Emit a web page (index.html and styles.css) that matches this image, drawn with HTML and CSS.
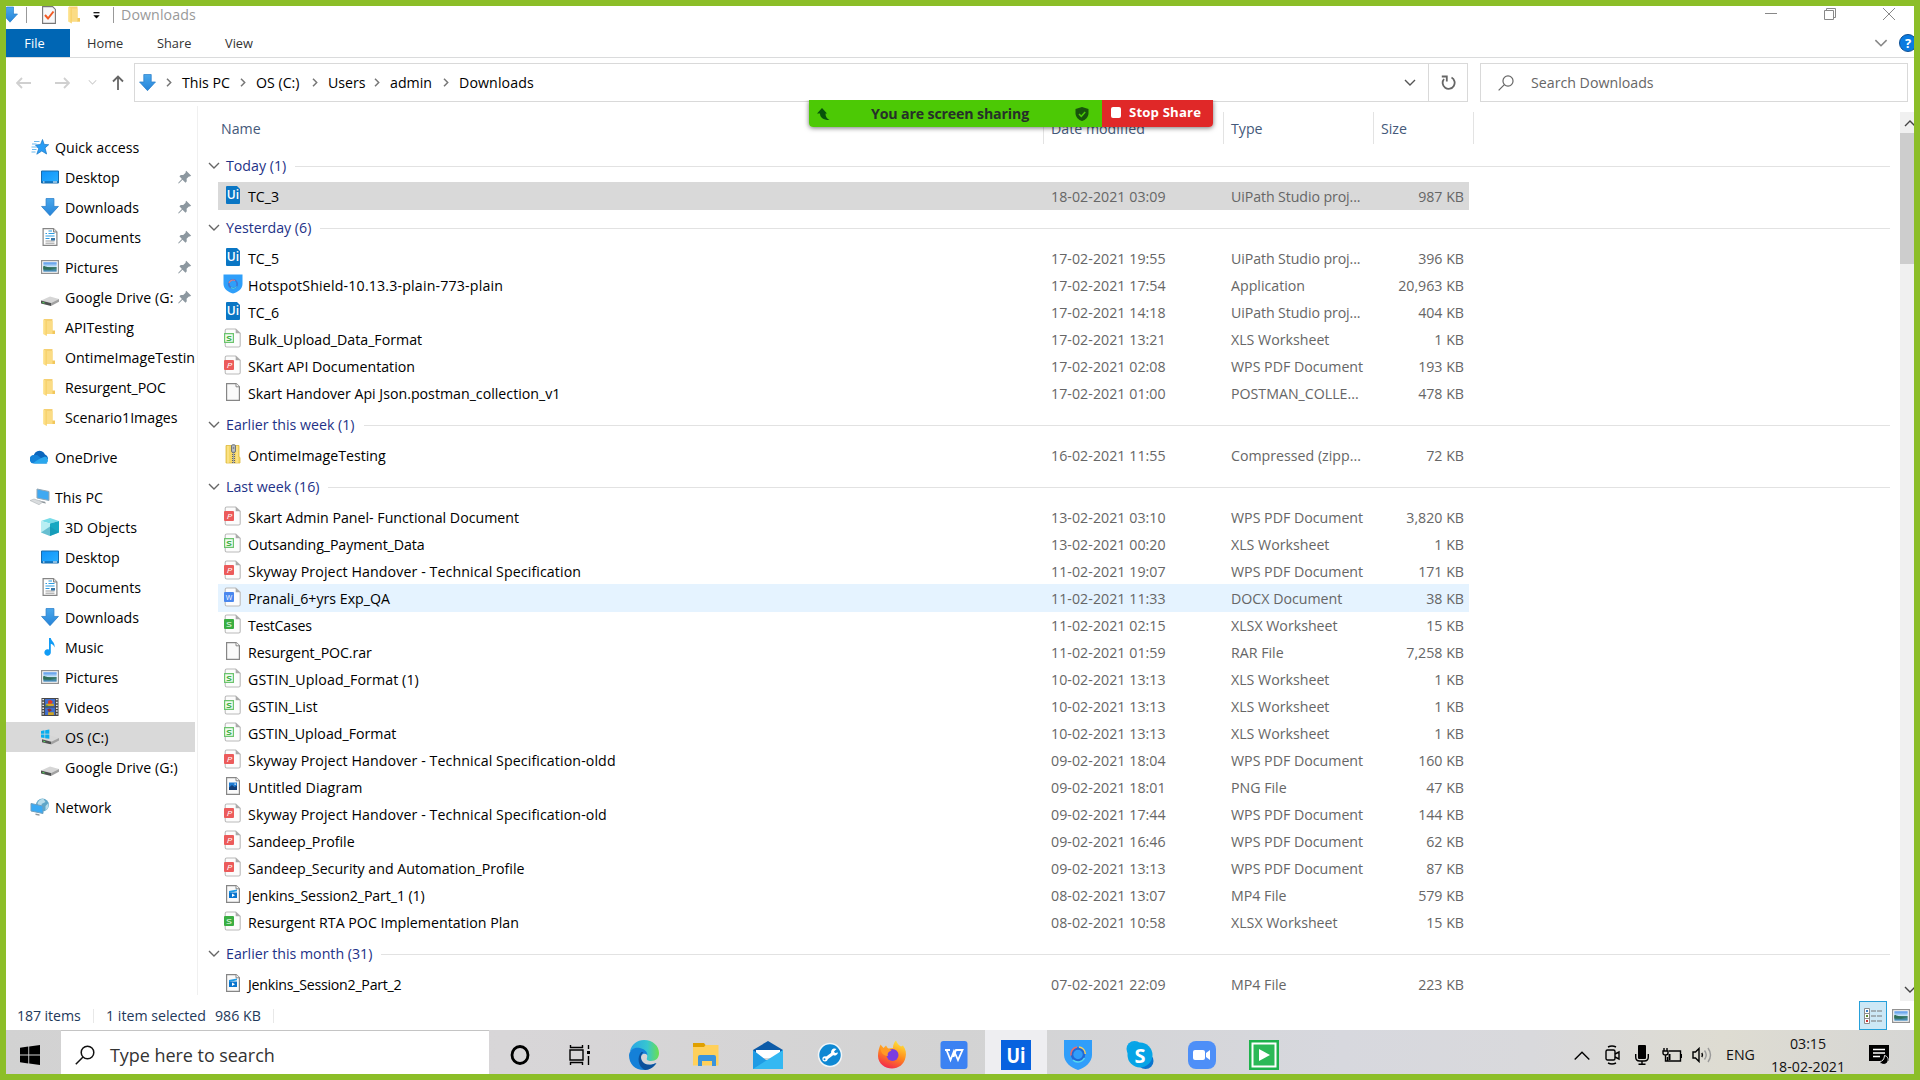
FILE: index.html
```html
<!DOCTYPE html>
<html lang="en">
<head>
<meta charset="utf-8">
<title>Downloads</title>
<link rel="stylesheet" href="styles.css">
</head>
<body>
<svg class="defs" width="0" height="0" aria-hidden="true">
<defs>
<linearGradient id="gBlue" x1="0" y1="0" x2="0" y2="1"><stop offset="0" stop-color="#4aa8ec"/><stop offset="1" stop-color="#2583d8"/></linearGradient>
<linearGradient id="gFold" x1="0" y1="0" x2="1" y2="0"><stop offset="0" stop-color="#ffe9a3"/><stop offset="1" stop-color="#f7cf62"/></linearGradient>
<linearGradient id="gSky" x1="0" y1="0" x2="0" y2="1"><stop offset="0" stop-color="#4a90e8"/><stop offset=".5" stop-color="#d4ecfa"/><stop offset=".55" stop-color="#3f7d6d"/><stop offset="1" stop-color="#4a8fc4"/></linearGradient>
<linearGradient id="gDesk" x1="0" y1="0" x2="1" y2="1"><stop offset="0" stop-color="#0f93fa"/><stop offset="1" stop-color="#2bb0ff"/></linearGradient>
<linearGradient id="gEdge" x1="0" y1="0" x2="1" y2="0"><stop offset="0" stop-color="#2aa5e6"/><stop offset=".6" stop-color="#37c6d0"/><stop offset="1" stop-color="#6be04e"/></linearGradient>
<linearGradient id="gFox" x1=".7" y1="0" x2=".3" y2="1"><stop offset="0" stop-color="#ffe53b"/><stop offset=".5" stop-color="#ff8a1c"/><stop offset="1" stop-color="#f3244f"/></linearGradient>
<symbol id="down" viewBox="0 0 16 16"><path d="M4.500.500h7v7h4L8 15.700.500 7.500h4z" fill="url(#gBlue)" stroke="#2a7fcb" stroke-width=".7"/></symbol>
<symbol id="folder" viewBox="0 0 12 17"><path d="M1 0h8.500v12l2.500 1v2H1z" fill="#f5d071"/><path d="M9 11.500h3V15H9z" fill="#f2c75c"/><path d="M0 .3 3.800 2v15L0 15z" fill="url(#gFold)"/><path d="M3.800 2H9.500v13H3.800z" fill="#fbdc85"/></symbol>
<symbol id="star" viewBox="0 0 18 16"><path d="m11.500.5 1.700 4.900 4.500.3-3.700 3.200 1.600 6.100-4.800-3-5 3.200 1.900-5.500L4.500 6l5-.5z" fill="#2a9df4" stroke="#1576c4" stroke-width=".7"/><path d="M3 2.500h5.500M1 5h4.500M.5 8H6M1 10.500h4.500M.5 13h4" stroke="#6ab8ee"/></symbol>
<symbol id="desktop" viewBox="0 0 18 13"><path d="M.5.5h17v12H.5z" fill="url(#gDesk)" stroke="#1b6cab"/><path d="M1 11.500h16" stroke="#116bb0" stroke-width="1.400"/><path d="M2 11.500h1.500M12 11.500h4" stroke="#fff"/></symbol>
<symbol id="doc" viewBox="0 0 15 18"><path d="M.6.6h10.400l3.400 3.400v13.400H.6z" fill="#fff" stroke="#858585" stroke-width="1.200"/><path d="M11 .6V4h3.400" fill="#ddd" stroke="#858585"/><path d="M3 5.500h1.500M6 3h3.500M6 5.500h6M3 8h9M3 10.500h4" stroke="#2f9be0" stroke-width="1.200"/><path d="M3 13h9M3 15.200h9" stroke="#999"/><path d="M8.500 10h4v2.500h-4z" fill="#3a76a6"/></symbol>
<symbol id="picture" viewBox="0 0 18 14"><path d="M.6.6h16.800v12.800H.6z" fill="#fff" stroke="#929292" stroke-width="1.200"/><path d="M2.300 2.300h13.400v9.400H2.300z" fill="url(#gSky)"/><path d="M2.300 6c3 0 5 2.500 13.400 2.600L9 9.800 2.300 9.500z" fill="#2f6f59"/></symbol>
<symbol id="drive" viewBox="0 0 18 10"><path d="M0 4.500 9 .5l9 2.500-8 4z" fill="#d6d6d6"/><path d="M0 4.500 10 7v3L0 7.500z" fill="#4f5151"/><path d="m10 7 8-4v2.800L10 10z" fill="#a1a1a1"/><path d="M1.500 6.400 3.500 7" stroke="#54e85c"/></symbol>
<symbol id="osdrive" viewBox="0 0 19 16"><use href="#drive" x="1" y="6" width="18" height="10"/><path d="M0 1.600 3.700 1v3.600H0zM4.400.9 8.800.2v4.400H4.400zM0 5.300h3.700V9L0 8.500zM4.400 5.300h4.400v4.500l-4.400-.6z" fill="#08adee"/></symbol>
<symbol id="pin" viewBox="0 0 14 14"><path d="m8.200.8 5 5-1.500.8-.8-.2-2.300 2.400.2 2.500-1.300 1.400-3-3L1 13.200l-.8.300.3-.9 3.400-3.700-2.500-2.600 1.400-1.400 2.400.2 2.500-2.300-.2-.8z" fill="#8c979f"/></symbol>
<symbol id="cloud" viewBox="0 0 20 14"><path d="M4 9a5.800 5.800 0 0 1 11-4.500A5 5 0 0 1 18 9z" fill="#0b66bd"/><circle cx="4" cy="9" r="4" fill="#1283db"/><path d="M4.500 13.500a4 4 0 0 1-1.300-8l4-.4 10.300 8.400z" fill="#1482d8"/><path d="M3.500 13c3-3 7.500-5 11.500-6.500A3.800 3.800 0 0 1 16 13.600H5z" fill="#2aa7ed"/></symbol>
<symbol id="pc" viewBox="0 0 20 17"><path d="m7 .5 12 2.500v9L7 9.500z" fill="#3fa9f2" stroke="#93a7b5"/><path d="m9 12 6 1.200 1 1.800-6-1z" fill="#8e979d"/><path d="m0 12 4-1.500 9 3-4 2.700z" fill="#d9dcde" stroke="#a4aaae" stroke-width=".5"/></symbol>
<symbol id="cube" viewBox="0 0 18 18"><path d="m0 3 9-3 9 3-9 2.500z" fill="#77dce8"/><path d="m0 3 9 2.500V18L0 14.500z" fill="#b8eef3"/><path d="m18 3-9 2.500V18l9-3.500z" fill="#16a8c2"/><path d="m0 14.500 9-6 9 6L9 18z" fill="#158fb0" opacity=".5"/></symbol>
<symbol id="music" viewBox="0 0 12 18"><path d="M5 0h1.800c.4 3 4.500 4.500 3.700 9.500-.6-2.200-2-3.300-3.700-3.700v8.500a3.200 3.200 0 1 1-1.800-2.700z" fill="#109bf5"/></symbol>
<symbol id="video" viewBox="0 0 18 19"><path d="M0 0h18v19H0z" fill="#474747"/><path d="M1.800 1v17M16.200 1v17" stroke="#e6e6e6" stroke-width="1.800" stroke-dasharray="1.500 1.500"/><path d="M3.800 1h10.400v8H3.800zM3.800 10h10.400v8H3.800z" fill="#3f6fcf"/><path d="m7 3 3-1 2 2-2 3H7z" fill="#dd3b28"/><path d="M5 6h8v2.500H5zM7 15h6v3H7z" fill="#d0a622"/><path d="m6 12 3-1 2 2-3 2z" fill="#8e3030"/><path d="M4 8h3v1H4z" fill="#2f8a38"/></symbol>
<symbol id="network" viewBox="0 0 19 18"><circle cx="12" cy="7" r="6.500" fill="#5ea6c8"/><path d="M7 5c2-4 4-4 6-4l2 3-4 2 1 3-4 1zM15 8l3-3v4l-3 4z" fill="#b7dcea"/><path d="m.5 5.500 12 2.500v7.500L.5 13z" fill="#3aaaf4" stroke="#6f9fbd"/><path d="m5 15.500 4 .7v1.500l-4-.7z" fill="#8e979d"/></symbol>
<symbol id="blank" viewBox="0 0 20 20"><path d="M3.600 1.600h9.600l3.200 3.200v13.600H3.600z" fill="#fafafa" stroke="#868686" stroke-width="1.200"/><path d="M13 1.600v3.200h3.400" fill="#fff" stroke="#868686"/></symbol>
<symbol id="ui" viewBox="0 0 20 20"><path d="M3 2q0-1 1-1h10l3 3v14q0 1-1 1H4q-1 0-1-1z" fill="#0a76c4"/><text x="10" y="14" text-anchor="middle" font-family="Open Sans" font-weight="600" font-size="12" fill="#fff">Ui</text></symbol>
<symbol id="shield" viewBox="0 0 20 20"><path d="M.5.5h19V10c0 5-5 8.500-9.500 9.500C5.500 18.500.5 15 .5 10z" fill="#2f9ffa"/><circle cx="10" cy="10" r="4.200" fill="none" stroke="#3f76d4" stroke-width="1.700"/><path d="M6 9A4.200 4.200 0 0 1 12 6.500" fill="none" stroke="#d97f86" stroke-width="1.200"/><path d="M8 13.500a4.200 4.200 0 0 0 5.500-1" fill="none" stroke="#46cee4" stroke-width="1.200"/></symbol>
<symbol id="sheet" viewBox="0 0 20 20"><path d="M3.700 1h9l4.500 4.300v12.200q0 1.500-1.500 1.500H3.700q-1.500 0-1.500-1.500v-15q0-1.500 1.500-1.500z" fill="#fcfcfc" stroke="#bababa" stroke-width="1.100"/><path d="M12.700 1v4.300h4.500z" fill="#aaa"/></symbol>
<symbol id="xls" viewBox="0 0 20 20"><use href="#sheet"/><path d="M1.600 5.600h8.800v8.800H1.600z" fill="#f2fbf2" stroke="#6cc46e" stroke-width="1.200"/><text x="6" y="12.800" text-anchor="middle" font-family="Open Sans" font-weight="700" font-size="7.500" textLength="6" lengthAdjust="spacingAndGlyphs" fill="#43b247">S</text></symbol>
<symbol id="xlsx" viewBox="0 0 20 20"><use href="#sheet"/><rect x="1" y="5" width="10" height="10" rx="1" fill="#3aae42"/><text x="6" y="12.800" text-anchor="middle" font-family="Open Sans" font-weight="600" font-size="7.500" textLength="6" lengthAdjust="spacingAndGlyphs" fill="#d0f0d2">S</text></symbol>
<symbol id="pdf" viewBox="0 0 20 20"><use href="#sheet"/><rect x="1" y="5" width="10" height="10" rx="1" fill="#ec5b5b"/><text x="6.500" y="12.600" text-anchor="middle" font-family="Open Sans" font-style="italic" font-size="7.500" textLength="5.500" lengthAdjust="spacingAndGlyphs" fill="#fff">P</text></symbol>
<symbol id="docx" viewBox="0 0 20 20"><use href="#sheet"/><rect x="1" y="5" width="10" height="10" rx="1" fill="#4a87ee"/><text x="6" y="12.600" text-anchor="middle" font-family="Open Sans" font-size="7" fill="#fff">W</text></symbol>
<symbol id="png" viewBox="0 0 20 20"><use href="#blank"/><path d="M6 6.500h8v7.500H6z" fill="#1e7ad1"/><path d="m6 11.500 3-2.500 2.500 2 2.500-1.500V14H6z" fill="#123e77"/><path d="M11.500 7.500h1.300v1.300h-1.300z" fill="#fff"/></symbol>
<symbol id="mp4" viewBox="0 0 20 20"><use href="#blank"/><path d="m6 7 8-1.500v1.800L6 9z" fill="#1f9ae4"/><path d="M6 8.500h8V14H6z" fill="#0874ce"/><path d="m9 9.500 3 1.700-3 1.700z" fill="#fff"/></symbol>
<symbol id="zip" viewBox="0 0 20 20"><path d="M3 1.500h13V13l1 .5V19H3z" fill="#f6d866" stroke="#ddb940" stroke-width=".8"/><path d="M5 2v17M14 2v17" stroke="#ffeaa0"/><path d="M10.500 8v11" stroke="#5f6468" stroke-width="3" stroke-dasharray="1 1"/><path d="M10.500 8v11" stroke="#aaa"/><rect x="8.500" y=".8" width="4" height="7.500" rx="1.200" fill="#b8bcc0" stroke="#707579"/><path d="M9.800 4h1.400" stroke="#555"/></symbol>
<symbol id="chev" viewBox="0 0 12 8"><path d="m1 1 5 5 5-5" fill="none" stroke="currentColor" stroke-width="1.400"/></symbol>
<symbol id="crumb" viewBox="0 0 6 9"><path d="m1 .8 3.700 3.700L1 8.200" fill="none" stroke="#777" stroke-width="1.500"/></symbol>
<symbol id="magnify" viewBox="0 0 20 20"><circle cx="12.500" cy="7.500" r="6.300" fill="none" stroke="currentColor" stroke-width="1.500"/><path d="M8 12 .8 19.200" stroke="currentColor" stroke-width="1.500"/></symbol>
</defs>
</svg>
<div class="screen">
  <header class="titlebar">
    <svg class="t-down"><use href="#down"/></svg><i class="bar"></i>
    <svg class="t-check" viewBox="0 0 14 18"><path d="M.6.6h10l2.800 2.800v14H.6z" fill="#f7f8fa" stroke="#777" stroke-width="1.100"/><path d="m3 9 3 3.500 5.500-7" fill="none" stroke="#f15a24" stroke-width="2"/></svg>
    <svg class="t-folder"><use href="#folder"/></svg>
    <svg class="t-menu" viewBox="0 0 7 7"><path d="M.5.700h6" stroke="#000" stroke-width="1.200"/><path d="M.3 3.200h6.400L3.500 6.600z"/></svg><i class="bar"></i>
    <span class="t-title">Downloads</span>
    <div class="winbtns"><svg viewBox="0 0 12 12"><path d="M0 5.500h12"/></svg><svg viewBox="0 0 12 12"><path d="M.5 2.500h9v9h-9zM2.500 2.500v-2h9v9h-2"/></svg><svg viewBox="0 0 12 12"><path d="m0 0 12 12M12 0 0 12"/></svg></div>
  </header>
  <nav class="ribbon">
    <span class="file">File</span><span class="tab home">Home</span><span class="tab share">Share</span><span class="tab view">View</span>
    <div class="rib-right"><svg class="expand"><use href="#chev"/></svg><svg class="help" viewBox="0 0 18 18"><circle cx="9" cy="9" r="8.500" fill="#0a7be0" stroke="#0d4f94"/><text x="9" y="13.800" text-anchor="middle" font-family="Open Sans" font-weight="700" font-size="13" fill="#fff">?</text></svg></div>
  </nav>
  <div class="navrow">
    <div class="arrows">
      <svg class="a-back" viewBox="0 0 15 12"><path d="M15 6H1M6 1 1 6l5 5"/></svg>
      <svg class="a-fwd" viewBox="0 0 15 12"><path d="M0 6h14M9 1l5 5-5 5"/></svg>
      <svg class="a-rec"><use href="#chev"/></svg>
      <svg class="a-up" viewBox="0 0 12 15"><path d="M6 15V1.500M1 6.500l5-5 5 5"/></svg>
    </div>
    <div class="address">
      <svg class="ad-ic"><use href="#down"/></svg>
      <svg class="cr"><use href="#crumb"/></svg><span style="width:74px">This PC</span>
      <svg class="cr"><use href="#crumb"/></svg><span style="width:72px">OS (C:)</span>
      <svg class="cr"><use href="#crumb"/></svg><span style="width:62px">Users</span>
      <svg class="cr"><use href="#crumb"/></svg><span style="width:69px">admin</span>
      <svg class="cr"><use href="#crumb"/></svg><span class="here">Downloads</span>
      <svg class="ad-chev"><use href="#chev"/></svg>
      <div class="refresh"><svg viewBox="0 0 15 16"><path d="M10.500 2.500A6 6 0 1 1 3 4" fill="none" stroke="#666" stroke-width="1.800"/><path d="M.8 1.500h5v5" fill="none" stroke="#666" stroke-width="1.800"/></svg></div>
    </div>
    <div class="searchbox"><svg><use href="#magnify"/></svg><span>Search Downloads</span></div>
  </div>
  <main class="body">
    <aside class="side">
      <div class="it top"><svg class="st"><use href="#star"/></svg><span>Quick access</span></div>
      <div class="it"><svg><use href="#desktop"/></svg><span>Desktop</span><svg class="pin"><use href="#pin"/></svg></div>
      <div class="it"><svg><use href="#down"/></svg><span>Downloads</span><svg class="pin"><use href="#pin"/></svg></div>
      <div class="it"><svg><use href="#doc"/></svg><span>Documents</span><svg class="pin"><use href="#pin"/></svg></div>
      <div class="it"><svg><use href="#picture"/></svg><span>Pictures</span><svg class="pin"><use href="#pin"/></svg></div>
      <div class="it"><svg class="low"><use href="#drive"/></svg><span class="wide">Google Drive (G:</span><svg class="pin"><use href="#pin"/></svg></div>
      <div class="it"><svg class="fo"><use href="#folder"/></svg><span>APITesting</span></div>
      <div class="it"><svg class="fo"><use href="#folder"/></svg><span>OntimeImageTestin</span></div>
      <div class="it"><svg class="fo"><use href="#folder"/></svg><span class="tight">Resurgent_POC</span></div>
      <div class="it"><svg class="fo"><use href="#folder"/></svg><span>Scenario1Images</span></div>
      <div class="it top gap"><svg><use href="#cloud"/></svg><span>OneDrive</span></div>
      <div class="it top gap"><svg><use href="#pc"/></svg><span>This PC</span></div>
      <div class="it"><svg><use href="#cube"/></svg><span>3D Objects</span></div>
      <div class="it"><svg><use href="#desktop"/></svg><span>Desktop</span></div>
      <div class="it"><svg><use href="#doc"/></svg><span>Documents</span></div>
      <div class="it"><svg><use href="#down"/></svg><span>Downloads</span></div>
      <div class="it"><svg><use href="#music"/></svg><span>Music</span></div>
      <div class="it"><svg><use href="#picture"/></svg><span>Pictures</span></div>
      <div class="it"><svg><use href="#video"/></svg><span>Videos</span></div>
      <div class="it on"><svg><use href="#osdrive"/></svg><span>OS (C:)</span></div>
      <div class="it"><svg class="low"><use href="#drive"/></svg><span class="wide">Google Drive (G:)</span></div>
      <div class="it top gap"><svg><use href="#network"/></svg><span>Network</span></div>
    </aside>
    <section class="list">
      <div class="cols"><span class="c-name">Name</span><span class="c-date">Date modified</span><span class="c-type">Type</span><span class="c-size">Size</span></div>
      <div class="grp"><svg><use href="#chev"/></svg><span>Today (1)</span><i></i></div>
      <div class="row sel"><svg><use href="#ui"/></svg><span class="n">TC_3</span><span class="d">18-02-2021 03:09</span><span class="t tight">UiPath Studio proj...</span><span class="s">987 KB</span></div>
      <div class="grp"><svg><use href="#chev"/></svg><span>Yesterday (6)</span><i></i></div>
      <div class="row"><svg><use href="#ui"/></svg><span class="n">TC_5</span><span class="d">17-02-2021 19:55</span><span class="t tight">UiPath Studio proj...</span><span class="s">396 KB</span></div>
      <div class="row"><svg><use href="#shield"/></svg><span class="n wider">HotspotShield-10.13.3-plain-773-plain</span><span class="d">17-02-2021 17:54</span><span class="t">Application</span><span class="s">20,963 KB</span></div>
      <div class="row"><svg><use href="#ui"/></svg><span class="n">TC_6</span><span class="d">17-02-2021 14:18</span><span class="t tight">UiPath Studio proj...</span><span class="s">404 KB</span></div>
      <div class="row"><svg><use href="#xls"/></svg><span class="n">Bulk_Upload_Data_Format</span><span class="d">17-02-2021 13:21</span><span class="t">XLS Worksheet</span><span class="s">1 KB</span></div>
      <div class="row"><svg><use href="#pdf"/></svg><span class="n">SKart API Documentation</span><span class="d">17-02-2021 02:08</span><span class="t">WPS PDF Document</span><span class="s">193 KB</span></div>
      <div class="row"><svg><use href="#blank"/></svg><span class="n">Skart Handover Api Json.postman_collection_v1</span><span class="d">17-02-2021 01:00</span><span class="t">POSTMAN_COLLE...</span><span class="s">478 KB</span></div>
      <div class="grp"><svg><use href="#chev"/></svg><span>Earlier this week (1)</span><i></i></div>
      <div class="row"><svg><use href="#zip"/></svg><span class="n">OntimeImageTesting</span><span class="d">16-02-2021 11:55</span><span class="t">Compressed (zipp...</span><span class="s">72 KB</span></div>
      <div class="grp"><svg><use href="#chev"/></svg><span>Last week (16)</span><i></i></div>
      <div class="row"><svg><use href="#pdf"/></svg><span class="n">Skart Admin Panel- Functional Document</span><span class="d">13-02-2021 03:10</span><span class="t">WPS PDF Document</span><span class="s">3,820 KB</span></div>
      <div class="row"><svg><use href="#xls"/></svg><span class="n tight">Outsanding_Payment_Data</span><span class="d">13-02-2021 00:20</span><span class="t">XLS Worksheet</span><span class="s">1 KB</span></div>
      <div class="row"><svg><use href="#pdf"/></svg><span class="n wide">Skyway Project Handover - Technical Specification</span><span class="d">11-02-2021 19:07</span><span class="t">WPS PDF Document</span><span class="s">171 KB</span></div>
      <div class="row hov"><svg><use href="#docx"/></svg><span class="n">Pranali_6+yrs Exp_QA</span><span class="d">11-02-2021 11:33</span><span class="t">DOCX Document</span><span class="s">38 KB</span></div>
      <div class="row"><svg><use href="#xlsx"/></svg><span class="n tighter">TestCases</span><span class="d">11-02-2021 02:15</span><span class="t">XLSX Worksheet</span><span class="s">15 KB</span></div>
      <div class="row"><svg><use href="#blank"/></svg><span class="n tight">Resurgent_POC.rar</span><span class="d">11-02-2021 01:59</span><span class="t">RAR File</span><span class="s">7,258 KB</span></div>
      <div class="row"><svg><use href="#xls"/></svg><span class="n wide">GSTIN_Upload_Format (1)</span><span class="d">10-02-2021 13:13</span><span class="t">XLS Worksheet</span><span class="s">1 KB</span></div>
      <div class="row"><svg><use href="#xls"/></svg><span class="n">GSTIN_List</span><span class="d">10-02-2021 13:13</span><span class="t">XLS Worksheet</span><span class="s">1 KB</span></div>
      <div class="row"><svg><use href="#xls"/></svg><span class="n">GSTIN_Upload_Format</span><span class="d">10-02-2021 13:13</span><span class="t">XLS Worksheet</span><span class="s">1 KB</span></div>
      <div class="row"><svg><use href="#pdf"/></svg><span class="n wide">Skyway Project Handover - Technical Specification-oldd</span><span class="d">09-02-2021 18:04</span><span class="t">WPS PDF Document</span><span class="s">160 KB</span></div>
      <div class="row"><svg><use href="#png"/></svg><span class="n wide">Untitled Diagram</span><span class="d">09-02-2021 18:01</span><span class="t">PNG File</span><span class="s">47 KB</span></div>
      <div class="row"><svg><use href="#pdf"/></svg><span class="n wide">Skyway Project Handover - Technical Specification-old</span><span class="d">09-02-2021 17:44</span><span class="t">WPS PDF Document</span><span class="s">144 KB</span></div>
      <div class="row"><svg><use href="#pdf"/></svg><span class="n">Sandeep_Profile</span><span class="d">09-02-2021 16:46</span><span class="t">WPS PDF Document</span><span class="s">62 KB</span></div>
      <div class="row"><svg><use href="#pdf"/></svg><span class="n">Sandeep_Security and Automation_Profile</span><span class="d">09-02-2021 13:13</span><span class="t">WPS PDF Document</span><span class="s">87 KB</span></div>
      <div class="row"><svg><use href="#mp4"/></svg><span class="n tight">Jenkins_Session2_Part_1 (1)</span><span class="d">08-02-2021 13:07</span><span class="t">MP4 File</span><span class="s">579 KB</span></div>
      <div class="row"><svg><use href="#xlsx"/></svg><span class="n">Resurgent RTA POC Implementation Plan</span><span class="d">08-02-2021 10:58</span><span class="t">XLSX Worksheet</span><span class="s">15 KB</span></div>
      <div class="grp"><svg><use href="#chev"/></svg><span>Earlier this month (31)</span><i></i></div>
      <div class="row"><svg><use href="#mp4"/></svg><span class="n tighter">Jenkins_Session2_Part_2</span><span class="d">07-02-2021 22:09</span><span class="t">MP4 File</span><span class="s">223 KB</span></div>
    </section>
    <div class="scroll"><div class="sb"><svg class="flip"><use href="#chev"/></svg></div><div class="thumb"></div><div class="sb end"><svg><use href="#chev"/></svg></div></div>
  </main>
  <footer class="status">
    <span class="s1">187 items</span><i></i><span class="s2">1 item selected</span><span class="s3">986 KB</span><i></i>
    <div class="views"><span class="vw"><svg viewBox="0 0 18 16"><path d="M.5.5h5v15h-5zM.5 5.500h5M.5 10.500h5" fill="#fff" stroke="#8d8d8d"/><path d="M7 3h5M13 3h5M7 8h5M13 8h5M7 13h5M13 13h5" stroke="#777"/><path d="M2 2h2v2H2z" fill="#3d7ec2"/><path d="M2 7h2v2H2z" fill="#5e8d31"/><path d="M2 12h2v2H2z" fill="#c33"/></svg></span><svg class="big"><use href="#picture"/></svg></div>
  </footer>
  <div class="taskbar">
    <div class="start"><svg viewBox="0 0 20 20"><path d="M0 2.800 8.300 1.600v8H0zM9.200 1.500 20 0v9.600H9.200zM0 10.400h8.300v8L0 17.200zM9.200 10.400H20V20L9.200 18.500z"/></svg></div>
    <div class="tsearch"><svg><use href="#magnify"/></svg><span>Type here to search</span></div>
    <div class="apps">
      <div><svg viewBox="0 0 30 30"><ellipse cx="15" cy="15" rx="8" ry="8.500" fill="none" stroke="#000" stroke-width="2.800"/></svg></div>
      <div><svg viewBox="0 0 30 30" fill="none" stroke="#000" stroke-width="1.400"><path d="M3 10h13v10H3zM3.500 5v2.500h12V5M3.500 25v-2.500h12V25M21.500 5v4M21.500 16v9"/><path d="M20 11h3v3h-3z" fill="#000" stroke="none"/></svg></div>
      <div><svg viewBox="0 0 30 30"><path d="M1 11C3 4 8 0 15 0c9 0 15 6 15 13 0 5-3 8-8 8-3 0-5-1-4-3 1-3-1-6-4-7-5-1-9-1-13 0z" fill="url(#gEdge)"/><path d="M0 15C1 9 6 7 11 8c4 1 7 3 7.500 7-4-3-7.500 0-6.500 4 1 5 7 8 15 4-3 4-7 7-12 7C6 30 0 24 0 15z" fill="#1480d8"/><path d="M12.500 12c-5 5-3.500 15 3.500 18 5 0 9-3 11.500-7-7 3.500-13 1.500-15-3-1-3-.5-6 2-8z" fill="#0c519c"/></svg></div>
      <div><svg viewBox="0 0 30 30"><path d="M2 5h25.500v20.500H2z" fill="#ffd05b"/><path d="M2 3h11l1.500 2L13 7H2z" fill="#e0a000"/><path d="M7 17q0-2 2-2h14q2 0 2 2v9h-4v-5H11v5H7z" fill="#3b94dc"/></svg></div>
      <div><svg viewBox="0 0 30 30"><path d="m0 10 15-9 15 9v4H0z" fill="#0d5ba8"/><path d="M3 10h24v8H3z" fill="#fff"/><path d="M0 10v19h30V10L17 20h-4z" fill="#1f9be4"/><path d="M0 29 30 10v19z" fill="#34b8f2"/></svg></div>
      <div><svg viewBox="0 0 30 30"><circle cx="15" cy="15" r="11.500" fill="#0e88d3" stroke="#f2f6f8" stroke-width="1.500"/><path d="m10.500 19 8-6" stroke="#fff" stroke-width="3"/><path d="M21.500 9a3.500 3.500 0 1 0 1.500 3.500l-3 .5-1-1.500z" fill="#fff"/><circle cx="10" cy="18.800" r="2.600" fill="#fff"/><circle cx="9.500" cy="19.200" r="1" fill="#0e88d3"/></svg></div>
      <div><svg viewBox="0 0 30 30"><path d="M3.500 4.500l3 3.500 2.500-2.500 2 3 5-.5c0-3 1-5.500 3-7.500 1 3 3 5 5 6l2-1c3 4 3.500 8 2.500 12-1.500 7-7 11-13.500 11S1 24 1 16c0-4 1-8 2.500-11.500z" fill="url(#gFox)"/><circle cx="15.500" cy="15" r="6" fill="#7a3de0"/><path d="M3.500 8c4 0 8 0 11 2.500-3 1-4.500 3-3.500 5.500-4 0-7.500-3-7.500-8z" fill="#ff9a26"/></svg></div>
      <div><svg viewBox="0 0 30 30"><rect x="1.500" y="1" width="27" height="28" rx="3" fill="#3c82f2"/><path d="M6 10h5M7.500 10l4 10L15 11l4 9 4.500-10H17l-2.500 7" fill="none" stroke="#fff" stroke-width="1.800"/></svg></div>
      <div class="act"><svg viewBox="0 0 30 30"><path d="M0 0h30v30H0z" fill="#0762df"/><text x="15" y="22.500" text-anchor="middle" font-family="Open Sans" font-weight="700" font-size="21" textLength="19" lengthAdjust="spacingAndGlyphs" fill="#fff">Ui</text></svg></div>
      <div><svg viewBox="0 0 30 30"><path d="M1 0h28v15c0 7-7 13-14 15C8 28 1 22 1 15z" fill="#309efa"/><g fill="none" stroke-width="1.500"><circle cx="15" cy="14.500" r="6" stroke="#2268d4" stroke-width="2.500"/><path d="M8 15.500a7.300 7.300 0 0 1 6-8.500" stroke="#ef6b68"/><path d="M16 7a7.300 7.300 0 0 1 6.300 7" stroke="#f2d165"/><path d="M10 20a7.300 7.300 0 0 0 11.500-2" stroke="#54d8ee"/></g></svg></div>
      <div><svg viewBox="0 0 30 30"><circle cx="9.500" cy="9" r="8" fill="#0aa5e8"/><circle cx="20.500" cy="21" r="8" fill="#0b74cf"/><circle cx="15" cy="15" r="12.500" fill="#06a4e6"/><text x="15" y="22.500" text-anchor="middle" font-family="Open Sans" font-weight="700" font-size="20" fill="#fff">S</text></svg></div>
      <div><svg viewBox="0 0 30 30"><rect x="1" y="1" width="28" height="28" rx="8" fill="#4e8ff8"/><rect x="6" y="10" width="12" height="10" rx="2" fill="#fff"/><path d="m19 13 4-3v10l-4-3z" fill="#fff"/></svg></div>
      <div><svg viewBox="0 0 30 30"><path d="M0 0h30v30H0z" fill="#1eb24c"/><path d="M3.500 3.500h23v23h-23z" fill="#2cb957" stroke="#fff" stroke-width="2"/><path d="m10 9 11 6-11 6z" fill="#fff"/></svg></div>
    </div>
    <div class="tray">
      <svg class="y1" viewBox="0 0 16 9"><path d="m.7 8.500 7.300-7.300 7.300 7.300"/></svg>
      <svg class="y2" viewBox="0 0 16 20"><rect x="1" y="5" width="9" height="10" rx="1.500"/><path d="M10 9l4-2v7l-4-2M3 2q4-2 8 0M3 18q4 2 8 0"/></svg>
      <svg class="y3" viewBox="0 0 14 20"><rect x="3" y="0" width="8" height="14" rx="1" fill="#000" stroke="none"/><path d="M.7 9v3q0 4 4 4h4.600q4 0 4-4V9M7 16v3M3.500 19.300h7"/></svg>
      <svg class="y4" viewBox="0 0 20 15"><path d="M7 3h11.500v10H5.500V9M19.500 6v4M1 3h5v2q0 2-2.500 2T1 5zM2 0v3M5 0v3M3.500 7v6h3"/><path d="M6.500 6h2v6h-2z" fill="#000" stroke="none"/></svg>
      <svg class="y5" viewBox="0 0 20 16"><path d="M1 5h2.500L7 1.500v13L3.500 11H1z"/><path d="M9.800 6q1.300 2 0 4"/><path d="M12.500 3.500q3.500 4.500 0 9M16 1q5 7 0 14" stroke="#999"/></svg>
      <span class="eng">ENG</span>
      <div class="clock"><span>03:15</span><span>18-02-2021</span></div>
      <svg class="y6" viewBox="0 0 20 20"><path d="M0 0h20v16h-5v4l-4-4H0z" fill="#000" stroke="none"/><path d="M4 4.500h12M4 8h12M4 11.500h7" stroke="#fff"/><path d="M15.500 10.500a4.500 4.500 0 1 1-5 6q4.500 0 5-6z" fill="#000" stroke="#eee" stroke-width="1"/></svg>
    </div>
  </div>
  <div class="sharebar">
    <div class="green"><svg class="g1" viewBox="0 0 13 12"><path d="M5 0 0 5.500h3C3 9.500 6 12 12.500 12 9.500 10.500 8.500 8.500 8.500 5.500H10z" fill="#07530a"/></svg><b>You are screen sharing</b><svg class="g2" viewBox="0 0 14 14"><path d="m7 0 6.500 2v4c0 4-3 7-6.500 8C3.500 13 .5 10 .5 6V2z" fill="#17540c"/><path d="m4 7 2.300 2.300L10.200 5" fill="none" stroke="#4ccb08" stroke-width="1.500"/></svg></div>
    <div class="red"><i></i><b>Stop Share</b></div>
  </div>
</div>
</body>
</html>
```
FILE: styles.css
```css
* { box-sizing: border-box; }
html, body { margin: 0; width: 1920px; height: 1080px; overflow: hidden; }
body { font-family: "Open Sans", "Noto Sans", sans-serif; font-size: 14.2px; color: #000; line-height: 20px; }
svg { display: block; flex: none; }
.defs { position: absolute; }
.screen { position: relative; width: 1920px; height: 1080px; border: 6px solid #8cbe28; background: #fff; display: flex; flex-direction: column; overflow: hidden; white-space: nowrap; }
.wide { letter-spacing: .1px; }
.wider { letter-spacing: .17px; }
.tight { letter-spacing: -.1px; }
.tighter { letter-spacing: -.25px; }

.titlebar { height: 23px; display: flex; align-items: flex-start; flex: none; }
.titlebar .bar { width: 1px; height: 16px; background: #999; margin-top: 1px; }
.t-down { width: 16px; height: 17px; margin: 0 8px 0 -4px; }
.t-check { width: 14px; height: 18px; margin-left: 15px; }
.t-folder { width: 12px; height: 18px; margin-left: 12px; }
.t-menu { width: 7px; height: 7px; margin: 6px 13px 0 13px; }
.t-title { margin: -1px 0 0 7px; color: #999; letter-spacing: .1px; }
.winbtns { margin: 2px 19px 0 auto; display: flex; gap: 47px; }
.winbtns svg { width: 12px; height: 12px; fill: none; stroke: #888; }

.ribbon { height: 29px; display: flex; border-bottom: 1px solid #dadbdc; flex: none; line-height: 28px; font-size: 12.8px; color: #333; }
.file { width: 64px; background: #0066b4; color: #fff; text-align: center; padding-right: 7px; }
.tab { width: 70px; }
.home { margin-left: 17px; }
.share { width: 68px; }
.rib-right { margin-left: auto; display: flex; align-items: center; margin-right: -3px; }
.expand { width: 14px; height: 9px; color: #888; margin-right: 11px; }
.help { width: 18px; height: 18px; }

.navrow { height: 48px; display: flex; padding: 5px 6px 4px 10px; flex: none; }
.arrows { display: flex; align-items: center; width: 118px; }
.arrows svg { fill: none; stroke: #666; stroke-width: 1.800; }
.arrows .a-back, .arrows .a-fwd { width: 15px; height: 12px; stroke: #d0d0d0; }
.a-fwd { margin-left: 24px; }
.arrows .a-rec { width: 9px; height: 7px; margin-left: 18px; color: #ccc; stroke: none; }
.a-up { width: 12px; height: 15px; margin-left: 15px; }
.address { width: 1334px; height: 39px; border: 1px solid #d9d9d9; display: flex; align-items: center; padding-left: 4px; }
.ad-ic { width: 17px; height: 17px; margin-right: 10px; }
.cr { width: 6px; height: 9px; margin-right: 10px; }
.address span { margin-right: -16px; }
.here { letter-spacing: .1px; }
.ad-chev { width: 12px; height: 8px; margin: 0 12px 0 auto; color: #555; }
.refresh { width: 39px; height: 37px; border-left: 1px solid #d9d9d9; display: flex; align-items: center; justify-content: center; }
.refresh svg { width: 15px; height: 16px; }
.searchbox { margin-left: auto; width: 428px; height: 39px; border: 1px solid #d9d9d9; display: flex; align-items: center; color: #666; }
.searchbox svg { width: 16px; height: 16px; margin: 0 17px; }

.body { height: 895px; display: flex; flex: none; }
.side { width: 192px; height: 889px; padding-top: 26px; border-right: 1px solid #f0f0f0; }
.it { width: 189px; height: 30px; padding-left: 35px; display: flex; align-items: center; overflow: hidden; }
.it > svg { width: 18px; height: 18px; margin-right: 6px; }
.it span { width: 117px; flex: none; margin-top: 1px; }
.it span:last-child { width: auto; }
.it svg.low { height: 10px; margin-top: 7px; }
.it svg.fo { height: 17px; margin-left: -1px; margin-right: 7px; }
.it.top { padding-left: 24px; }
.it.top > svg { width: 20px; margin-right: 5px; }
.it.top > svg.st { height: 16px; }
.gap { margin-top: 10px; }
.it svg.pin { width: 14px; height: 14px; margin: -1px 0 0 -4px; }
.on { background: #d9d9d9; }
.list { flex: 1; height: 895px; overflow: hidden; padding-top: 6px; }
.cols { height: 35px; display: flex; color: #44597a; }
.cols span { height: 32px; line-height: 33px; border-right: 1px solid #e3e3e3; }
.c-name { width: 846px; padding-left: 23px; }
.c-date { width: 180px; padding-left: 7px; }
.c-type { width: 150px; padding-left: 7px; }
.c-size { width: 100px; padding-left: 7px; }
.grp { height: 35px; padding: 3px 10px 0 10px; display: flex; align-items: center; color: #1e3287; }
.grp span { margin-top: -1px; }
.grp svg { width: 12px; height: 8px; margin-right: 6px; color: #666; }
.grp i { flex: 1; height: 1px; background: #e2e2e2; margin-left: 9px; }
.row { height: 27px; margin-left: 20px; width: 1251px; display: flex; line-height: 29px; color: #666; }
.row svg { width: 20px; height: 20px; margin: 3px 5px 0 5px; }
.n { width: 803px; color: #000; }
.d { width: 180px; letter-spacing: .05px; }
.t { width: 133px; }
.s { width: 100px; text-align: right; }
.sel { background: #d9d9d9; box-shadow: 0 1px #d9d9d9; }
.hov { background: #e5f3ff; box-shadow: 0 1px #e5f3ff; }
.scroll { width: 14px; height: 889px; margin-top: 6px; background: #f0f0f0; overflow: hidden; display: flex; flex-direction: column; }
.sb { height: 21px; padding: 7px 0 0 4px; color: #444; }
.sb svg { width: 12px; height: 8px; }
.flip { transform: scaleY(-1); }
.thumb { height: 131px; background: #cdcdcd; }
.end { margin-top: auto; padding-top: 6px; }

.status { height: 29px; display: flex; align-items: center; padding-left: 11px; color: #1e395b; flex: none; }
.status i { width: 1px; height: 14px; background: #e8e8e8; }
.s1 { width: 76px; letter-spacing: -.1px; }
.s2 { margin-left: 12px; width: 109px; }
.s3 { width: 58px; }
.views { margin-left: auto; display: flex; align-items: center; height: 29px; }
.vw { width: 28px; height: 29px; border: 1px solid #26a0da; background: #cce8f6; padding: 6px 4px; }
.vw svg { width: 18px; height: 16px; }
.big { width: 18px; height: 14px; margin: 0 4px 0 5px; }

.taskbar { height: 44px; display: flex; background: linear-gradient(90deg, #d2d2d2 0, #d8d6d8 26%, #d3d3d3 50%, #d7d8de 70%, #d9d9dc 80%, #dedcd2 90%, #d6d6d4 100%); flex: none; }
.start { width: 55px; padding: 15px 0 0 14px; }
.start svg { width: 20px; height: 20px; }
.tsearch { width: 428px; border-top: 1px solid #c4c4c4; background: #fff; display: flex; align-items: center; padding: 4px 0 0 14px; font-size: 18px; color: #333; }
.tsearch svg { width: 20px; height: 20px; margin-right: 15px; color: #111; }
.tsearch span { letter-spacing: -.05px; }
.apps { display: flex; }
.apps > div { width: 62px; height: 44px; padding: 10px 0 0 16px; }
.apps svg { width: 30px; height: 30px; }
.apps .act { background: #eeeef1; }
.tray { flex: 1; display: flex; align-items: center; padding: 6px 25px 0 0; justify-content: flex-end; color: #111; }
.tray svg { fill: none; stroke: #000; stroke-width: 1.400; }
.y1 { width: 16px; height: 9px; margin-right: 15px; }
.y2 { width: 16px; height: 20px; margin-right: 14px; }
.y3 { width: 14px; height: 20px; margin-right: 13px; }
.y4 { width: 20px; height: 15px; margin-right: 10px; }
.y5 { width: 20px; height: 16px; margin-right: 14px; }
.eng { width: 28px; margin-right: 16px; }
.clock { width: 76px; margin-right: 23px; display: flex; flex-direction: column; text-align: center; line-height: 23px; }
.y6 { width: 20px; height: 20px; }

.sharebar { position: absolute; left: 803px; top: 94px; width: 404px; height: 27px; display: flex; border-radius: 0 0 4px 4px; box-shadow: 0 1px 5px rgba(0,0,0,.55); clip-path: inset(0 -8px -8px -8px); }
.green { width: 293px; background: #4cc905; border-radius: 0 0 0 4px; display: flex; align-items: center; padding-left: 8px; color: #26302a; letter-spacing: -.15px; }
.g1 { width: 13px; height: 12px; margin-right: 41px; }
.green b { width: 204px; }
.g2 { width: 14px; height: 14px; }
.red { flex: 1; background: #e02828; border-radius: 0 0 4px 0; display: flex; align-items: center; padding: 0 0 3px 9px; color: #fff; font-size: 13.2px; letter-spacing: .15px; }
.red i { width: 10px; height: 11px; border-radius: 2px; background: #fff; margin-right: 8px; }
```
